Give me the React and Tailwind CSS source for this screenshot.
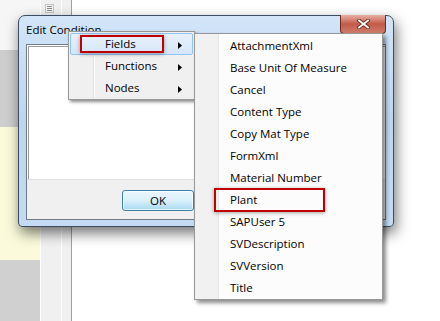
import { useState } from 'react';

const fields = [
  'AttachmentXml',
  'Base Unit Of Measure',
  'Cancel',
  'Content Type',
  'Copy Mat Type',
  'FormXml',
  'Material Number',
  'Plant',
  'SAPUser 5',
  'SVDescription',
  'SVVersion',
  'Title',
];

const Arrow = () => (
  <svg width="4" height="7" viewBox="0 0 4 7" className="absolute right-[10px] top-[8px]">
    <path d="M0 0 L4 3.5 L0 7 Z" fill="#000" />
  </svg>
);

const Grip = () => (
  <svg width="9" height="9" viewBox="0 0 9 9" className="absolute left-[4px] top-[4px]">
    <rect x="0.5" y="0.5" width="8" height="8" fill="#f4f4f4" stroke="#c4c4c4" />
    <path d="M2 2.5 H7 M2 4.5 H7 M2 6.5 H7" stroke="#8a8a8a" />
  </svg>
);

const CloseGlyph = () => (
  <svg width="13" height="10" viewBox="0 0 13 10">
    <path d="M2 1.5 L11 8.5 M11 1.5 L2 8.5" stroke="#6a2a22" strokeWidth="3.6" strokeLinecap="square" />
    <path d="M2 1.5 L11 8.5 M11 1.5 L2 8.5" stroke="#ffffff" strokeWidth="1.8" strokeLinecap="square" />
  </svg>
);

const MainMenu = () => {
  const [active] = useState('Fields');
  return (
    <div className="absolute left-[68px] top-[31px] w-[127px] h-[69px] border border-[#979797] bg-[#f0f0f0] p-[1px] shadow-[2px_2px_3px_rgba(0,0,0,0.45)]">
      <div className="absolute left-[24px] top-[1px] bottom-[1px] w-[1px] bg-[#e2e3e3]" />
      <div className="absolute left-[25px] top-[1px] bottom-[1px] w-[1px] bg-white" />
      {['Fields', 'Functions', 'Nodes'].map((name) => (
        <div
          key={name}
          className={
            name === active
              ? 'relative h-[22px] rounded-[2px] border border-[#8ec5f2] bg-gradient-to-b from-[#e8f1fb] to-[#d5e6f8]'
              : 'relative h-[22px] border border-transparent'
          }
        >
          <span className="absolute left-[34px] top-[2px] leading-[16px]">{name}</span>
          <Arrow />
          {name === active && (
            <div className="absolute left-[9px] top-[1px] w-[84px] h-[18px] border-2 border-[#c00000] shadow-[0_1px_4px_rgba(0,0,0,0.35)]" />
          )}
        </div>
      ))}
    </div>
  );
};

const FieldMenu = () => (
  <div className="absolute left-[194px] top-[33px] w-[189px] h-[267px] border border-[#979797] bg-[#fcfcfc] shadow-[3px_3px_4px_rgba(0,0,0,0.45)] flex">
    <div className="w-[24px] bg-[#f1f1f1] border-r border-[#e2e3e3]" />
    <div className="w-[1px] bg-white" />
    <div className="flex-1 pt-[1px] relative">
      {fields.map((f) => (
        <div key={f} className="h-[22px] pl-[10px] flex items-center leading-[16px]">
          {f}
        </div>
      ))}
      <div className="absolute left-[-6px] top-[154px] w-[111px] h-[24px] border-2 border-[#c00000] shadow-[0_1px_4px_rgba(0,0,0,0.35)]" />
    </div>
  </div>
);

const Dialog = () => (
  <div className="absolute left-[18px] top-[15px] w-[376px] h-[212px] rounded-t-[7px] rounded-b-[4px] border border-[#3c4d61] bg-gradient-to-b from-[#d2e5f9] via-[#bdd5ef] to-[#c4dbf3] shadow-[2px_6px_14px_rgba(0,0,0,0.55)] flex flex-col">
    <div className="relative h-[28px] shrink-0">
      <span className="absolute left-[7px] top-[6px] leading-[16px] text-black">Edit Condition</span>
      <div className="absolute right-[7px] top-[-1px] w-[46px] h-[19px] rounded-b-[4px] border border-[#6b2a22] border-t-0 bg-gradient-to-b from-[#e7b0a6] via-[#c25a48] to-[#cf7c6b] flex items-center justify-center">
        <CloseGlyph />
      </div>
    </div>
    <div className="mx-[7px] h-[176px] border border-[#6d7b8b] bg-white flex flex-col">
      <div className="flex-1 border-l border-t border-[#9c9c9c] ml-[1px] mt-[1px] bg-white" />
      <div className="h-[40px] bg-[#f0f0f0] border-t border-[#dfdfdf] pl-[95px] pt-[10px]">
        <div className="w-[72px] h-[21px] rounded-[3px] border border-[#3c7fb1] bg-gradient-to-b from-[#eaf6fd] via-[#d9f0fc] to-[#a7d9f5] shadow-[inset_0_0_0_1px_rgba(255,255,255,0.7)] flex items-center justify-center">
          OK
        </div>
      </div>
    </div>
  </div>
);

export default function App() {
  return (
    <div className="relative w-[440px] h-[321px] overflow-hidden bg-white flex font-['Segoe_UI','Open_Sans',sans-serif] text-[11.5px] text-black">
      <div className="w-[40px] flex flex-col">
        <div className="h-[50px] bg-[#f6f6f6]" />
        <div className="h-[77px] bg-[#cecece]" />
        <div className="h-[133px] bg-[#fbfbdc]" />
        <div className="flex-1 bg-[#d0d0d0]" />
      </div>
      <div className="relative w-[22px] bg-[#f0f0f0] border-l border-white border-r border-[#a0a0a0]">
        <Grip />
      </div>
      <div className="w-[10px] bg-[#f0f0f0] border-r border-[#a0a0a0]" />
      <div className="flex-1 bg-white" />

      <Dialog />
      <MainMenu />
      <FieldMenu />
    </div>
  );
}
